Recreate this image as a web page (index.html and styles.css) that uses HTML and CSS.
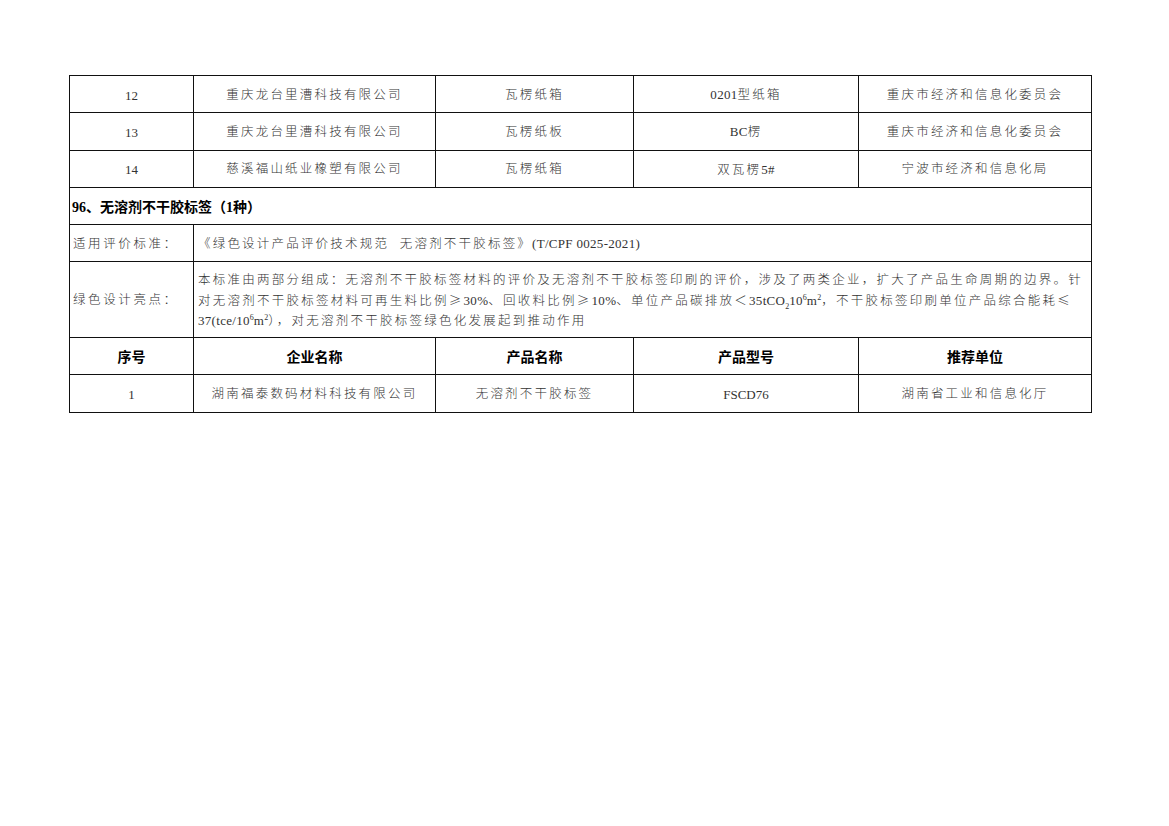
FILE: index.html
```html
<!DOCTYPE html>
<html lang="zh-CN">
<head>
<meta charset="utf-8">
<title>绿色设计产品名单</title>
<link rel="stylesheet" href="styles.css">
</head>
<body>
<div class="page">
<table class="list">
  <colgroup>
    <col class="c1"><col class="c2"><col class="c3"><col class="c4"><col class="c5">
  </colgroup>
  <tbody>
    <tr class="row">
      <td class="num">12</td><td>重庆龙台里漕科技有限公司</td><td>瓦楞纸箱</td><td><span class="lt">0201</span>型纸箱</td><td>重庆市经济和信息化委员会</td>
    </tr>
    <tr class="row">
      <td class="num">13</td><td>重庆龙台里漕科技有限公司</td><td>瓦楞纸板</td><td><span class="lt">BC</span>楞</td><td>重庆市经济和信息化委员会</td>
    </tr>
    <tr class="row">
      <td class="num">14</td><td>慈溪福山纸业橡塑有限公司</td><td>瓦楞纸箱</td><td>双瓦楞<span class="lt">5#</span></td><td>宁波市经济和信息化局</td>
    </tr>
    <tr class="row">
      <td class="section" colspan="5">96、无溶剂不干胶标签（1种）</td>
    </tr>
    <tr class="row">
      <td class="label">适用评价标准：</td>
      <td class="text" colspan="4">《绿色设计产品评价技术规范&nbsp; 无溶剂不干胶标签》<span class="lt">(T/CPF 0025-2021)</span></td>
    </tr>
    <tr class="row-tall">
      <td class="label">绿色设计亮点：</td>
      <td class="text desc" colspan="4"><span class="line">本标准由两部分组成：无溶剂不干胶标签材料的评价及无溶剂不干胶标签印刷的评价，涉及了两类企业，扩大了产品生命周期的边界。针</span><span class="line">对无溶剂不干胶标签材料可再生料比例<span class="sym">≥</span><span class="lt">30%</span>、回收料比例<span class="sym">≥</span><span class="lt">10%</span>、单位产品碳排放＜<span class="lt">35tCO<sub>2</sub>10<sup>6</sup>m<sup>2</sup></span>，不干胶标签印刷单位产品综合能耗<span class="sym">≤</span></span><span class="line"><span class="lt">37(tce/10<sup>6</sup>m<sup>2</sup></span>），对无溶剂不干胶标签绿色化发展起到推动作用</span></td>
    </tr>
    <tr class="row head">
      <th>序号</th><th>企业名称</th><th>产品名称</th><th>产品型号</th><th>推荐单位</th>
    </tr>
    <tr class="row">
      <td class="num">1</td><td>湖南福泰数码材料科技有限公司</td><td>无溶剂不干胶标签</td><td class="latin">FSCD76</td><td>湖南省工业和信息化厅</td>
    </tr>
  </tbody>
</table>
</div>
</body>
</html>
```

FILE: styles.css
```css
html, body {
  margin: 0;
  padding: 0;
  background: #ffffff;
}

.page {
  padding: 75px 0 0 69px;
}

.list {
  border-collapse: collapse;
  table-layout: fixed;
  width: 1023px;
  font-family: "Liberation Serif", "Noto Sans CJK SC", serif;
  color: #333333;
}

.c1 { width: 124px; }
.c2 { width: 242px; }
.c3 { width: 198px; }
.c4 { width: 225px; }
.c5 { width: 233px; }

.list td,
.list th {
  border: 1px solid #111111;
  padding: 2px 2px 0;
  text-align: center;
  vertical-align: middle;
  font-size: 12.5px;
  font-weight: 300;
  letter-spacing: 2.2px;
  line-height: 19px;
  overflow: hidden;
  white-space: nowrap;
}

.row td,
.row th {
  height: 34.3px;
}

.row-tall td {
  height: 72.5px;
}

.lt {
  letter-spacing: 0.3px;
  font-size: 13px;
}

.sym {
  font-family: "Noto Sans CJK SC", sans-serif;
  font-size: 12.5px;
}

.list td.num,
.list td.latin {
  font-size: 13px;
  letter-spacing: 0;
  color: #333333;
}

.list td.section {
  text-align: left;
  font-size: 14px;
  font-weight: 700;
  letter-spacing: 0;
  color: #000000;
  padding-left: 2px;
}

.list td.label {
  text-align: left;
  letter-spacing: 2.6px;
  padding-left: 3px;
}

.list td.text {
  text-align: left;
  padding-left: 4px;
}

.list td.desc {
  letter-spacing: 2.25px;
}

.line {
  display: block;
  white-space: nowrap;
}

.list sub,
.list sup {
  font-size: 8px;
  line-height: 0;
  letter-spacing: 0;
}

.list .head th {
  font-size: 14px;
  font-weight: 700;
  letter-spacing: 0;
  color: #000000;
}
```
